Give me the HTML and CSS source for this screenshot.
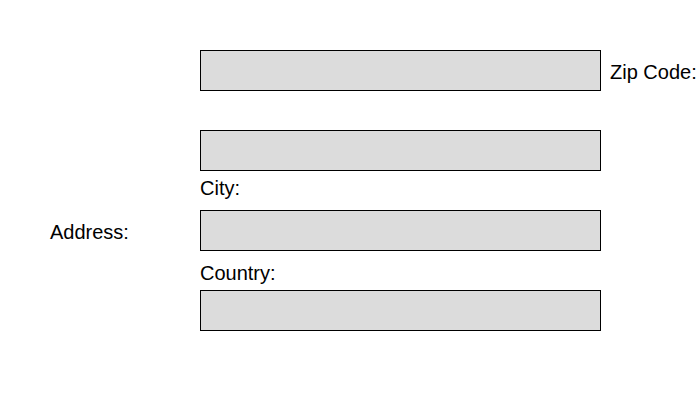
FILE: index.html
```html
<!DOCTYPE html>
<html>
<head>
<meta charset="utf-8">
<link rel="stylesheet" href="styles.css">
</head>
<body>
<form class="form">
  <div class="field f1"></div>
  <label class="label zip">Zip Code:</label>
  <div class="field f2"></div>
  <label class="label city">City:</label>
  <label class="label address">Address:</label>
  <div class="field f3"></div>
  <label class="label country">Country:</label>
  <div class="field f4"></div>
</form>
</body>
</html>
```
FILE: styles.css
```css
html, body {
  margin: 0;
  padding: 0;
  background: #ffffff;
}
body {
  width: 700px;
  height: 400px;
  overflow: hidden;
  font-family: "Liberation Sans", Arial, sans-serif;
  font-size: 20px;
  color: #000000;
}
.form {
  display: grid;
  grid-template-columns: 150px 401px 99px;
  grid-template-rows: repeat(7, 40px);
  padding: 50px 0 0 50px;
  margin: 0;
}
.field {
  grid-column: 2;
  align-self: start;
  box-sizing: border-box;
  border: 1px solid #000000;
  background: #dcdcdc;
  height: 41px;
}
.f1 { grid-row: 1; }
.f2 { grid-row: 3; }
.f3 { grid-row: 5; }
.f4 { grid-row: 7; }
.label {
  line-height: 23px;
  white-space: nowrap;
  align-self: start;
}
.zip {
  grid-column: 3;
  grid-row: 1;
  padding: 11px 0 0 9px;
}
.city {
  grid-column: 2;
  grid-row: 4;
  padding-top: 7px;
}
.address {
  grid-column: 1;
  grid-row: 5;
  padding-top: 11px;
}
.country {
  grid-column: 2;
  grid-row: 6;
  padding-top: 12px;
}
```
